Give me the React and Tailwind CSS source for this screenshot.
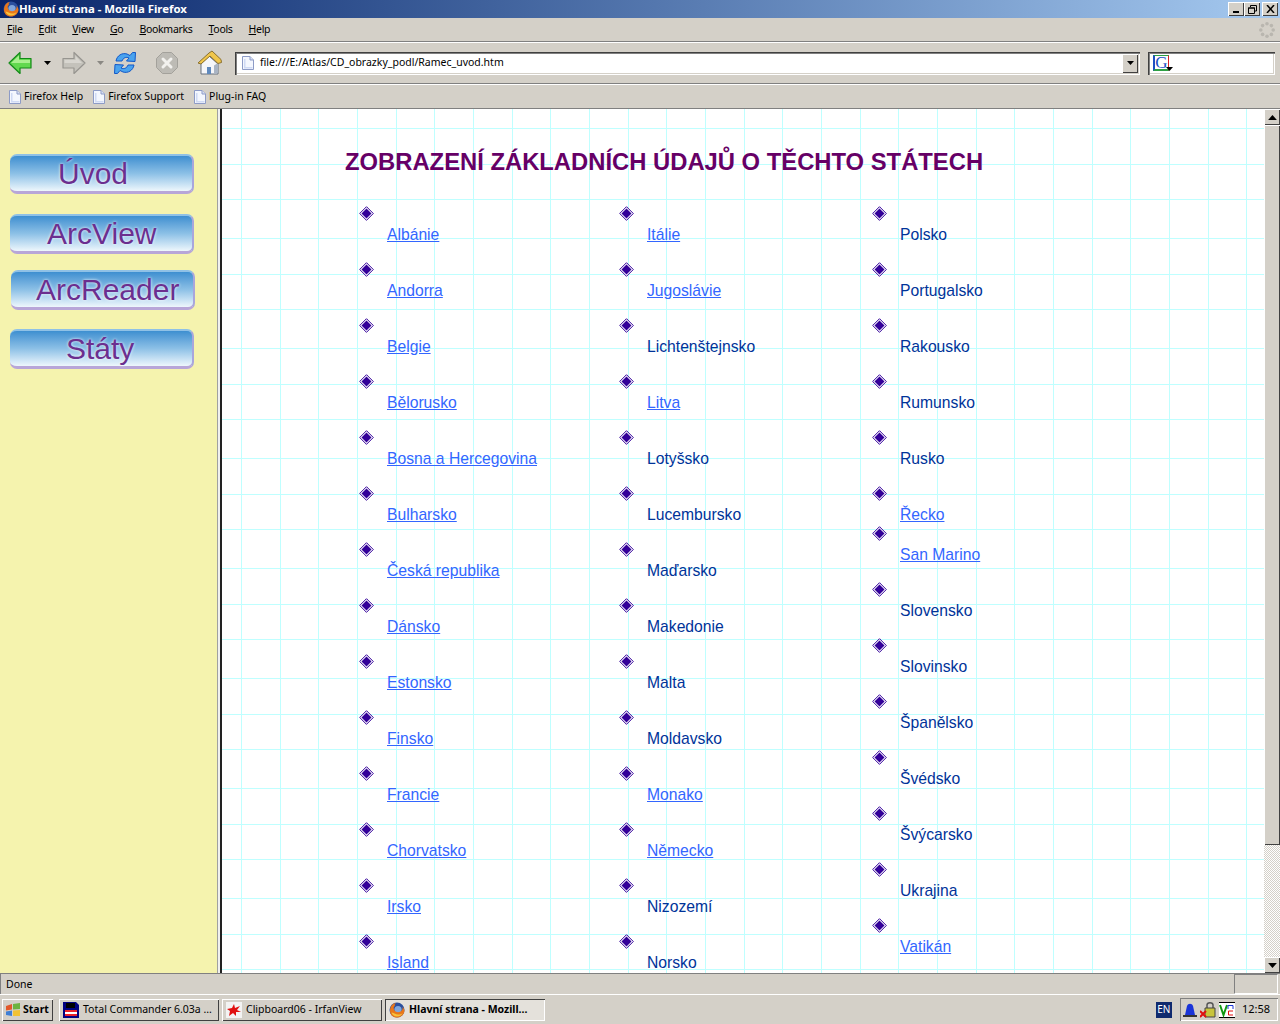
import React from "react";

const col1 = [
  ["Albánie", 1], ["Andorra", 1], ["Belgie", 1], ["Bělorusko", 1], ["Bosna a Hercegovina", 1], ["Bulharsko", 1], ["Česká republika", 1],
  ["Dánsko", 1], ["Estonsko", 1], ["Finsko", 1], ["Francie", 1], ["Chorvatsko", 1], ["Irsko", 1], ["Island", 1],
];
const col2 = [
  ["Itálie", 1], ["Jugoslávie", 1], ["Lichtenštejnsko", 0], ["Litva", 1], ["Lotyšsko", 0], ["Lucembursko", 0], ["Maďarsko", 0],
  ["Makedonie", 0], ["Malta", 0], ["Moldavsko", 0], ["Monako", 1], ["Německo", 1], ["Nizozemí", 0], ["Norsko", 0],
];
const col3 = [
  ["Polsko", 0], ["Portugalsko", 0], ["Rakousko", 0], ["Rumunsko", 0], ["Rusko", 0], ["Řecko", 1], ["San Marino", 1, true],
  ["Slovensko", 0], ["Slovinsko", 0], ["Španělsko", 0], ["Švédsko", 0], ["Švýcarsko", 0], ["Ukrajina", 0], ["Vatikán", 1],
];

const navButtons = [
  { label: "Úvod", box: "ml-[10px] mt-[45px]", text: "pl-[48px]" },
  { label: "ArcView", box: "ml-[10px] mt-[20px]", text: "pl-[37px]" },
  { label: "ArcReader", box: "ml-[11px] mt-[16px]", text: "pl-[25px]" },
  { label: "Státy", box: "ml-[10px] mt-[19px]", text: "pl-[56px]" },
];

function Diamond() {
  return (
    <svg width="15" height="15" viewBox="0 0 15 15" className="block">
      <path d="M7.5 0.7 14.3 7.5 7.5 14.3 0.7 7.5Z" fill="#fff" stroke="#330099" strokeWidth="1" />
      <path d="M7.5 2.5 12.5 7.5 7.5 12.5 2.5 7.5Z" fill="#330099" />
    </svg>
  );
}

function CountryColumn({ items, className }) {
  return (
    <div className={`flex flex-col ${className}`}>
      {items.map(([name, linked, tight]) => (
        <div key={name} className={`flex h-[56px] flex-col ${tight ? "-mt-[16px]" : ""}`}>
          <Diamond />
          <div className="ml-[28px] mt-[4px] h-[20px] whitespace-nowrap text-[15.7px] leading-[20px]">
            {linked ? (
              <a className="text-[#3366ff] underline" href="#">{name}</a>
            ) : (
              <span className="text-[#003399]">{name}</span>
            )}
          </div>
        </div>
      ))}
    </div>
  );
}

function FirefoxLogo({ size = 16 }) {
  return (
    <svg width={size} height={size} viewBox="0 0 16 16" className="shrink-0">
      <circle cx="8" cy="8" r="7.5" fill="#2a4f9e" />
      <circle cx="9" cy="7.5" r="3.6" fill="#7fa6dc" />
      <path d="M1 9C1 4 4 1 7 1 5.6 2 5.5 3.2 6 4 4.6 4.6 4.4 6 5 7.4 5.8 9.8 9 11 11.6 9.6 13 8.8 14 7.4 13.6 4.8 15 6.4 15.6 8 15.4 9.6 14.8 13 11.6 15.6 8 15.6 4 15.6 1 12.6 1 9Z" fill="#e8761a" />
      <path d="M2.4 10.5C3.4 13 5.6 14.6 8 14.6 10.4 14.6 12.6 13.4 13.8 11 11.6 12.8 8 13 5.6 11.6 4.4 11 3.2 10.6 2.4 10.5Z" fill="#f6c23c" />
    </svg>
  );
}

function PageIcon({ className = "" }) {
  return (
    <svg width="12" height="14" viewBox="0 0 12 14" className={`shrink-0 ${className}`}>
      <path d="M0.5 0.5H8L11.5 4V13.5H0.5Z" fill="#f4f7fe" stroke="#8d9bc6" />
      <path d="M8 0.5V4H11.5" fill="#d8e0f4" stroke="#8d9bc6" />
      <path d="M2 3V12.5H10.5V11H3.5V3Z" fill="#cfdaf4" />
    </svg>
  );
}

function BackIcon() {
  return (
    <svg width="24" height="24" viewBox="0 0 24 24">
      <path d="M1 12 12 1.5V7.5H23V17H12V22.5Z" fill="#62d94f" stroke="#138a18" strokeWidth="1.2" strokeLinejoin="round" />
      <path d="M3 12 11 4.5V9H22V12H4Z" fill="#a9f08f" />
    </svg>
  );
}

function ForwardIcon() {
  return (
    <svg width="24" height="24" viewBox="0 0 24 24">
      <path d="M23 12 12 1.5V7.5H1V17H12V22.5Z" fill="#c4c2bb" stroke="#979590" strokeWidth="1.2" strokeLinejoin="round" />
      <path d="M13.5 5V9H2.5V12H20Z" fill="#d8d6d0" />
    </svg>
  );
}

function ReloadIcon() {
  return (
    <svg width="24" height="24" viewBox="0 0 24 24">
      <path d="M3 10C4 4.5 9 1.5 14 3L17 4.5 19.5 1.5 22.5 1.5 22 10.5 13.5 10 16 7C13 5.5 10 7 9 10Z" fill="#4aa3ee" stroke="#1258c8" strokeWidth="1" strokeLinejoin="round" />
      <path d="M21 14C20 19.5 15 22.5 10 21L7 19.5 4.5 22.5 1.5 22.5 2 13.5 10.5 14 8 17C11 18.5 14 17 15 14Z" fill="#4aa3ee" stroke="#1258c8" strokeWidth="1" strokeLinejoin="round" />
    </svg>
  );
}

function StopIcon() {
  return (
    <svg width="24" height="24" viewBox="0 0 24 24">
      <path d="M7.5 1.5H16.5L22.5 7.5V16.5L16.5 22.5H7.5L1.5 16.5V7.5Z" fill="#bdbbb5" stroke="#a3a19b" strokeWidth="1" />
      <path d="M8 8 16 16M16 8 8 16" stroke="#f2f1ee" strokeWidth="3" strokeLinecap="round" />
    </svg>
  );
}

function HomeIcon() {
  return (
    <svg width="26" height="26" viewBox="0 0 26 26">
      <path d="M4 14V24H21V14L12 6Z" fill="#f5f6fa" stroke="#66707f" strokeWidth="1" />
      <path d="M17 24V15.5L21 13V23Z" fill="#a9b4c4" />
      <path d="M10 24V17H14V24Z" fill="#5f89bd" />
      <path d="M1 13 12 3 15 1 24 9.5 24.5 12.5 21 13.5 13 6 4 14Z" fill="#f0c64c" stroke="#8a7030" strokeWidth="1" strokeLinejoin="round" />
    </svg>
  );
}

function Throbber() {
  const dots = [[8, 1.8], [12.4, 3.6], [14.2, 8], [12.4, 12.4], [8, 14.2], [3.6, 12.4], [1.8, 8], [3.6, 3.6]];
  return (
    <svg width="16" height="16" viewBox="0 0 16 16">
      {dots.map(([x, y]) => (
        <circle key={`${x}-${y}`} cx={x} cy={y} r="1.8" fill="#b9b6af" />
      ))}
    </svg>
  );
}

function Caret({ className = "" }) {
  return (
    <svg width="7" height="4" viewBox="0 0 7 4" className={className}>
      <path d="M0 0H7L3.5 4Z" fill="currentColor" />
    </svg>
  );
}

function WinButton({ children, className = "" }) {
  return (
    <div className={`flex h-[14px] w-[16px] items-center justify-center bg-[#d4d0c8] shadow-[inset_1px_1px_0_#fff,inset_-1px_-1px_0_#404040] ${className}`}>
      {children}
    </div>
  );
}

function ScrollButton({ up }) {
  return (
    <div className="flex h-[16px] w-[16px] shrink-0 items-center justify-center bg-[#d4d0c8] text-black shadow-[inset_1px_1px_0_#fff,inset_-1px_-1px_0_#404040]">
      <Caret className={`h-[5px] w-[9px] ${up ? "rotate-180" : ""}`} />
    </div>
  );
}

function MenuLabel({ first, rest }) {
  return (
    <span>
      <span className="underline">{first}</span>
      {rest}
    </span>
  );
}

function TaskButton({ children, active, className = "" }) {
  return (
    <div className={`flex h-[22px] items-center overflow-hidden whitespace-nowrap text-[10.5px] text-black ${active ? "bg-[#e4e1db] font-bold shadow-[inset_1px_1px_0_#404040,inset_-1px_-1px_0_#fff]" : "bg-[#d4d0c8] shadow-[inset_1px_1px_0_#fff,inset_-1px_-1px_0_#404040]"} ${className}`}>
      {children}
    </div>
  );
}

export default function App() {
  return (
    <div className="flex h-[1024px] w-[1280px] flex-col overflow-hidden bg-[#d4d0c8] font-['Noto_Sans','Liberation_Sans',sans-serif] text-[10.5px] text-black">
      {/* title bar */}
      <div className="flex h-[18px] shrink-0 items-center bg-gradient-to-r from-[#0a246a] to-[#a6caf0] pl-[3px] pr-[2px]">
        <FirefoxLogo />
        <span className="text-[11.4px] font-bold text-white">Hlavní strana - Mozilla Firefox</span>
        <div className="ml-auto flex">
          <WinButton>
            <div className="mt-[6px] h-[2px] w-[6px] bg-black" />
          </WinButton>
          <WinButton>
            <svg width="9" height="9" viewBox="0 0 9 9">
              <path d="M2.5 2V.5H8.5V6H7M.5 3H6.5V8.5H.5Z" fill="none" stroke="#000" />
              <path d="M0 3H7" stroke="#000" strokeWidth="1" />
            </svg>
          </WinButton>
          <WinButton className="ml-[2px]">
            <svg width="9" height="8" viewBox="0 0 9 8">
              <path d="M1 0 8 8M8 0 1 8" stroke="#000" strokeWidth="1.5" />
            </svg>
          </WinButton>
        </div>
      </div>

      {/* menu bar */}
      <div className="flex h-[24px] shrink-0 items-center justify-between border-b border-[#808080] pl-[7px] pr-[5px]">
        <div className="flex gap-[16px] pt-[1px] text-[10.5px] tracking-[-0.3px]">
          <MenuLabel first="F" rest="ile" />
          <MenuLabel first="E" rest="dit" />
          <MenuLabel first="V" rest="iew" />
          <MenuLabel first="G" rest="o" />
          <MenuLabel first="B" rest="ookmarks" />
          <MenuLabel first="T" rest="ools" />
          <MenuLabel first="H" rest="elp" />
        </div>
        <Throbber />
      </div>

      {/* navigation toolbar */}
      <div className="flex h-[42px] shrink-0 items-center border-b border-t border-b-[#808080] border-t-white pl-[8px] pr-[4px]">
        <BackIcon />
        <Caret className="ml-[12px] text-black" />
        <div className="ml-[11px]"><ForwardIcon /></div>
        <Caret className="ml-[11px] text-[#8a8883]" />
        <div className="ml-[9px]"><ReloadIcon /></div>
        <div className="ml-[18px]"><StopIcon /></div>
        <div className="ml-[18px]"><HomeIcon /></div>
        <div className="ml-[12px] flex h-[23px] w-[905px] items-center bg-white pl-[7px] shadow-[inset_1px_1px_0_#404040,inset_2px_2px_0_#808080,inset_-1px_-1px_0_#fff,inset_-2px_-2px_0_#d4d0c8]">
          <PageIcon />
          <span className="ml-[6px] text-[10.5px]">file:///E:/Atlas/CD_obrazky_podl/Ramec_uvod.htm</span>
          <div className="ml-auto mr-[2px] flex h-[19px] w-[16px] items-center justify-center bg-[#d4d0c8] shadow-[inset_1px_1px_0_#fff,inset_-1px_-1px_0_#404040]">
            <Caret />
          </div>
        </div>
        <div className="ml-[8px] flex h-[23px] w-[127px] items-center bg-white pl-[5px] shadow-[inset_1px_1px_0_#404040,inset_2px_2px_0_#808080,inset_-1px_-1px_0_#fff,inset_-2px_-2px_0_#d4d0c8]">
          <div className="relative flex h-[16px] w-[16px] items-center justify-center border-b-2 border-l-2 border-r border-t border-b-[#2ea043] border-l-[#1d4fc4] border-r-[#d6262a] border-t-[#2ea043] font-['Liberation_Serif',serif] text-[17px] leading-none text-[#1d4fc4]">
            G
            <Caret className="absolute -bottom-[2px] -right-[5px] text-black" />
          </div>
        </div>
      </div>

      {/* bookmarks toolbar */}
      <div className="flex h-[25px] shrink-0 items-center border-b border-t border-b-[#808080] border-t-white pl-[9px] pt-[1px] text-[10.5px]">
        <PageIcon />
        <span className="ml-[3px]">Firefox Help</span>
        <PageIcon className="ml-[10px]" />
        <span className="ml-[3px]">Firefox Support</span>
        <PageIcon className="ml-[10px]" />
        <span className="ml-[3px]">Plug-in FAQ</span>
      </div>

      {/* page */}
      <div className="flex h-[864px] shrink-0 overflow-hidden">
        <aside className="flex w-[217px] shrink-0 flex-col bg-[#f5f3ae]">
          {navButtons.map((b) => (
            <div
              key={b.label}
              className={`h-[40px] w-[184px] shrink-0 rounded-[7px] border-b-[3px] border-r-2 border-t-2 border-b-[#b8a6d8] border-r-[#a9a6dc] border-t-[#8fc1e6] bg-gradient-to-b from-[#3d8fd0] via-[#8cc0e6] to-[#eef7fc] font-['Liberation_Sans',sans-serif] text-[30px] leading-[35px] text-[#6b2f8f] [text-shadow:0_0_3px_#fff] ${b.box} ${b.text}`}
            >
              {b.label}
            </div>
          ))}
        </aside>
        <div className="w-[1px] shrink-0 bg-[#a0a0a0]" />
        <div className="w-[2px] shrink-0 bg-[#f0f0ee]" />
        <div className="w-[2px] shrink-0 bg-[#222]" />
        <main className="relative flex-1 overflow-hidden bg-white bg-[linear-gradient(to_right,transparent_19px,#bfffff_19px,#bfffff_20px,transparent_20px,transparent_58px,#bfffff_58px,#bfffff_59px,transparent_59px,transparent_96px,#bfffff_96px,#bfffff_97px,transparent_97px),linear-gradient(to_bottom,transparent_19px,#bfffff_19px,#bfffff_20px,transparent_20px,transparent_55px,#bfffff_55px,#bfffff_56px,transparent_56px,transparent_90px,#bfffff_90px,#bfffff_91px,transparent_91px)] bg-[size:116px_110px] font-['Liberation_Sans',sans-serif]">
          <div className="ml-[123px] mt-[38px] whitespace-nowrap text-[23.8px] font-bold leading-[30px] text-[#660066]">
            ZOBRAZENÍ ZÁKLADNÍCH ÚDAJŮ O TĚCHTO STÁTECH
          </div>
          <div className="ml-[137px] mt-[29px] flex">
            <CountryColumn items={col1} className="w-[260px]" />
            <CountryColumn items={col2} className="w-[253px]" />
            <CountryColumn items={col3} className="w-[200px]" />
          </div>
          {/* scrollbar */}
          <div className="absolute bottom-0 right-0 top-0 flex w-[16px] flex-col bg-[repeating-conic-gradient(#d4d0c8_0_25%,#fff_0_50%)] bg-[size:2px_2px]">
            <ScrollButton up />
            <div className="h-[720px] shrink-0 bg-[#d4d0c8] shadow-[inset_1px_1px_0_#fff,inset_-1px_-1px_0_#404040]" />
            <div className="flex-1" />
            <ScrollButton />
          </div>
        </main>
      </div>

      {/* status bar */}
      <div className="flex h-[22px] shrink-0 border-b border-t border-b-white border-t-[#808080] text-[10.5px]">
        <div className="flex flex-1 items-center pl-[6px] pt-[1px] shadow-[inset_1px_0_0_#808080]">Done</div>
        <div className="mr-[2px] w-[44px] border border-b-white border-l-[#808080] border-r-white border-t-[#808080]" />
      </div>

      {/* taskbar */}
      <div className="flex flex-1 items-center px-[2px]">
        <TaskButton className="w-[51px] gap-[2px] pl-[3px] font-bold">
          <svg width="16" height="14" viewBox="0 0 16 14" className="shrink-0">
            <path d="M1 3 7 1V6.5L1 7.5Z" fill="#e2582a" />
            <path d="M8 1 15 0V6L8 6.5Z" fill="#6cb33f" />
            <path d="M1 8.5 7 7.5V13L1 12Z" fill="#3f7fd4" />
            <path d="M8 7.5 15 7V13L8 13Z" fill="#f1c232" />
          </svg>
          Start
        </TaskButton>
        <TaskButton className="ml-[6px] w-[160px] gap-[4px] pl-[4px]">
          <svg width="16" height="16" viewBox="0 0 16 16" className="shrink-0">
            <path d="M0 0H13L16 3V16H0Z" fill="#000080" />
            <path d="M3 1H12V6H3Z" fill="#000" />
            <path d="M2 8H14V14H2Z" fill="#e8212a" />
            <path d="M2 10H14V12H2Z" fill="#fff" />
          </svg>
          Total Commander 6.03a ...
        </TaskButton>
        <TaskButton className="ml-[3px] w-[160px] gap-[4px] pl-[4px]">
          <svg width="16" height="16" viewBox="0 0 16 16" className="shrink-0">
            <path d="M0 0H16V16H0Z" fill="#f3f3f3" />
            <path d="M8 2 9 6 14 4 11 8 15 10 10 10 10 14 7 11 3 14 4 9 1 7 6 6Z" fill="#e01010" />
          </svg>
          Clipboard06 - IrfanView
        </TaskButton>
        <TaskButton active className="ml-[3px] w-[160px] gap-[4px] pl-[4px]">
          <FirefoxLogo />
          Hlavní strana - Mozill...
        </TaskButton>
        <div className="ml-auto flex items-center">
          <div className="flex h-[16px] w-[16px] items-center justify-center bg-[#0f2a6e] text-[10px] text-white">EN</div>
          <div className="ml-[8px] flex h-[23px] items-center gap-[2px] pl-[2px] pr-[8px] shadow-[inset_1px_1px_0_#808080,inset_-1px_-1px_0_#fff]">
            <svg width="16" height="16" viewBox="0 0 16 16">
              <path d="M3 13 5 4C6 1 10 1 11 4L13 13Z" fill="#1a34d8" />
              <path d="M1 13H15V15H1Z" fill="#333" />
            </svg>
            <svg width="17" height="16" viewBox="0 0 17 16">
              <path d="M7 6V3C7 0 13 0 13 3V6" fill="none" stroke="#555" strokeWidth="1.5" />
              <path d="M5 6H15V15H5Z" fill="#c8c43c" stroke="#444" />
              <path d="M0 9 6 15M6 9 0 15" stroke="#e01010" strokeWidth="2" />
            </svg>
            <svg width="16" height="16" viewBox="0 0 16 16">
              <path d="M0 0H16V16H0Z" fill="#fff" />
              <path d="M0 0H16V1H0ZM0 15H16V16H0Z" fill="#000" />
              <path d="M1 3 4.5 13 8 3" fill="none" stroke="#119911" strokeWidth="2" />
              <path d="M9 7V3.5H14V7" fill="none" stroke="#1a34d8" />
              <path d="M14 9H9.5V13H14" fill="none" stroke="#e01010" />
            </svg>
            <span className="ml-[5px] text-[11px]">12:58</span>
          </div>
        </div>
      </div>
    </div>
  );
}
